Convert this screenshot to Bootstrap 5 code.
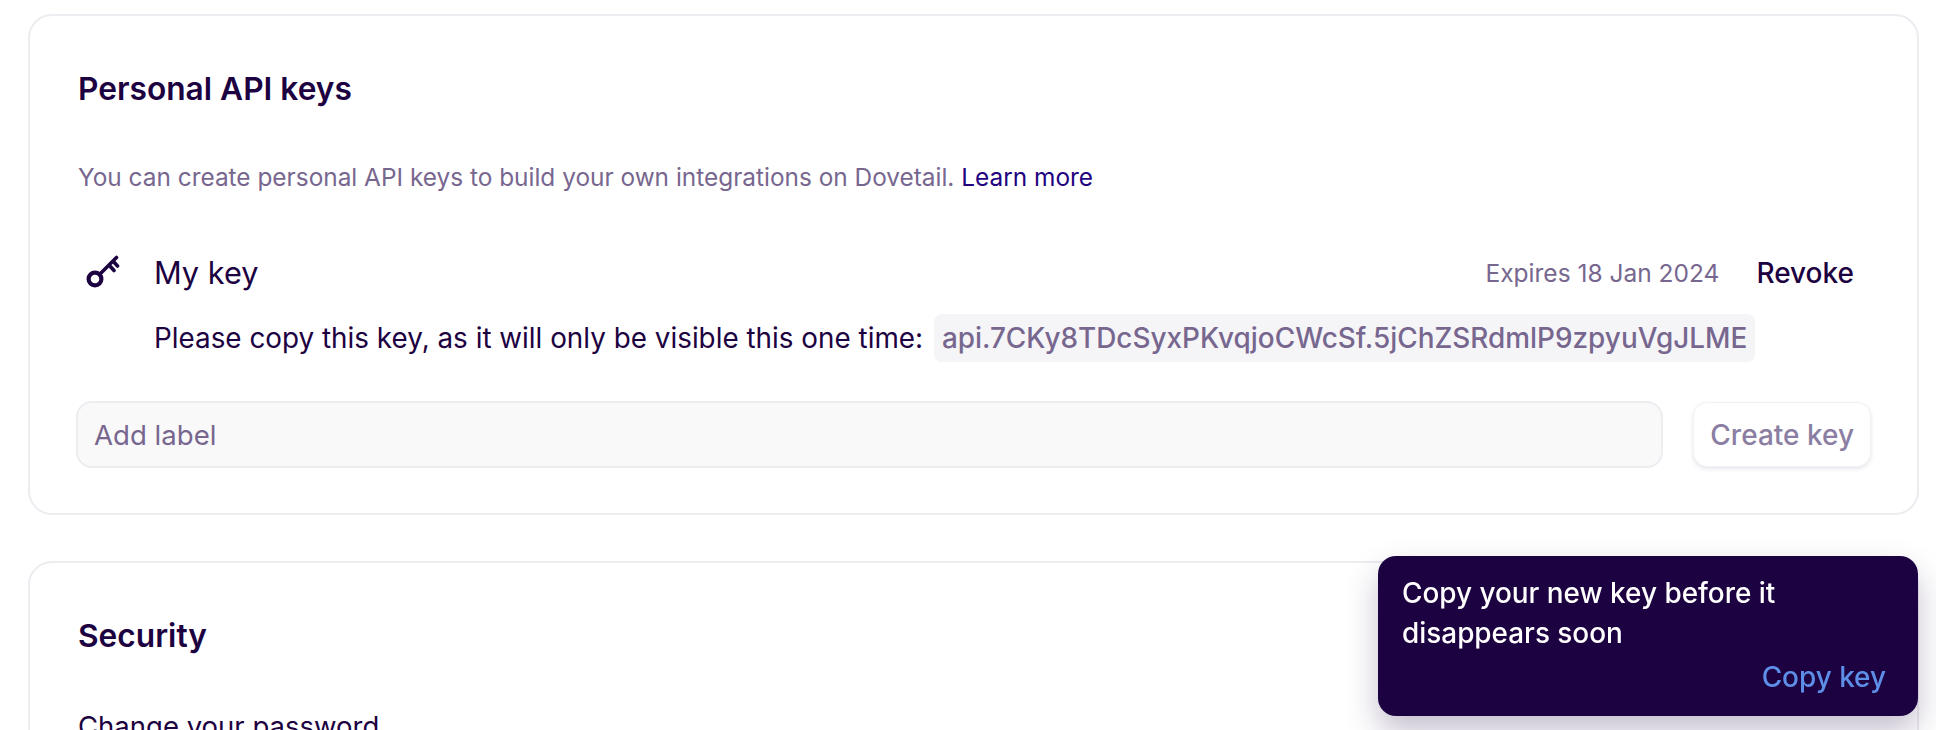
<!DOCTYPE html>
<html lang="en">
<head>
<meta charset="utf-8">
<title>Settings</title>
<link rel="stylesheet" href="https://cdn.jsdelivr.net/npm/bootstrap@5.3.0/dist/css/bootstrap.min.css">
<style>
html,body{height:730px;overflow:hidden;background:#fff}
body{font-family:Inter,"Liberation Sans",sans-serif;color:#1d0241;padding:14px 17px 0 28px;font-size:28px}
.panel{border:2px solid #ececf1;border-radius:24px;background:#fff;padding:53px 46px 45px 48px;margin-bottom:46px}
.panel-title{font-size:31.7px;font-weight:600;line-height:40px;margin:0 0 50px;color:#1d0241}
.panel-desc{font-size:24.4px;line-height:36px;color:#77678f;margin:0 0 57px}
.panel-desc a{color:#22027f;text-decoration:none;font-weight:400}
.key-icon{width:44px;height:36px;flex:none;margin-right:32px}
.key-name{font-size:30.7px;line-height:40px}
.key-exp{font-size:24.5px;color:#77678f;margin-right:37px}
.key-revoke{font-size:28px;font-weight:500;color:#1d0241;background:none;border:0;padding:0;margin-right:17px}
.key-note{padding-left:76px;font-size:27.85px;line-height:48px;margin-top:20px}
.key-chip{display:inline-block;background:#f5f5f8;color:#77678f;border-radius:8px;padding:0 8px;margin-left:3px;font-size:27.9px;font-weight:500;font-family:inherit}
.key-form{margin-top:39px;gap:30px}
.label-input{height:67px;border:2px solid #ececf1;border-radius:16px;background:#f9f9fa;font-size:27.6px;padding:0 16px;color:#77678f;margin-left:-2px}
.label-input::placeholder{color:#77678f;opacity:1}
.create-btn,.create-btn:disabled{height:65px;border:1px solid #f2f2f5;border-radius:14px;background:#fff;color:#8b7ea3;font-size:28px;font-weight:500;padding:0 16px;box-shadow:0 2px 4px rgba(29,2,65,.1);opacity:1}
.notice{position:fixed;left:1378px;top:556px;width:540px;height:160px;background:#1d0241;color:#fff;border-radius:18px;padding:17px 32px 0 24px;font-size:27.9px;line-height:40px;font-weight:500;box-shadow:0 16px 32px rgba(29,2,65,.25)}
.notice-link{color:#5e8fe8;text-decoration:none;display:block;text-align:right;margin-top:4px}
.second-row{font-size:27.5px;line-height:40px;margin-top:9px}
</style>
</head>
<body>
<section class="panel">
  <h2 class="panel-title">Personal API keys</h2>
  <p class="panel-desc">You can create personal API keys to build your own integrations on Dovetail. <a href="#">Learn more</a></p>
  <div class="d-flex align-items-center">
    <svg class="key-icon" viewBox="0 0 44 36" fill="none" stroke="#1d0241" stroke-width="3.6" stroke-linecap="round">
      <circle cx="17" cy="24" r="6.400" stroke-width="4.200"/>
      <path d="M22 19 38.500 2.500M31 10 36 15.500M35 6l4.500 5"/>
    </svg>
    <div class="key-name flex-grow-1">My key</div>
    <span class="key-exp">Expires 18 Jan 2024</span>
    <button class="key-revoke" type="button">Revoke</button>
  </div>
  <div class="key-note">Please copy this key, as it will only be visible this one time: <code class="key-chip">api.7CKy8TDcSyxPKvqjoCWcSf.5jChZSRdmlP9zpyuVgJLME</code></div>
  <div class="d-flex key-form align-items-center">
    <input class="form-control label-input flex-grow-1 w-auto" placeholder="Add label">
    <button class="btn create-btn" type="button" disabled>Create key</button>
  </div>
</section>
<section class="panel">
  <h2 class="panel-title">Security</h2>
  <div class="second-row">Change your password</div>
</section>
<aside class="notice">
  Copy your new key before it<br>disappears soon
  <a class="notice-link" href="#">Copy key</a>
</aside>
<script src="https://cdn.jsdelivr.net/npm/bootstrap@5.3.0/dist/js/bootstrap.bundle.min.js"></script>
</body>
</html>
